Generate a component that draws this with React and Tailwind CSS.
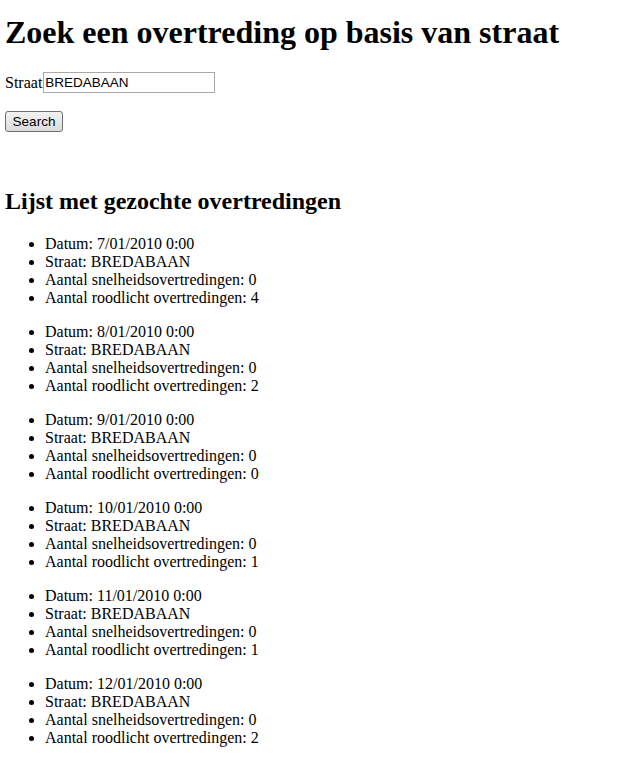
import React from "react";

const items = [
  { d: "7/01/2010 0:00", r: 4 },
  { d: "8/01/2010 0:00", r: 2 },
  { d: "9/01/2010 0:00", r: 0 },
  { d: "10/01/2010 0:00", r: 1 },
  { d: "11/01/2010 0:00", r: 1 },
  { d: "12/01/2010 0:00", r: 2 },
];

export default function App() {
  return (
    <div className="bg-white text-black px-[5px] font-['Liberation_Serif','Times_New_Roman',serif] text-[16px] leading-[18px] min-h-[760px]">
      <h1 className="mt-[14px] text-[32px] leading-[37px] font-bold">
        Zoek een overtreding op basis van straat
      </h1>
      <div className="mt-[21px] flex items-center h-[21px]">
        <span className="leading-[21px]">Straat</span>
        <input
          defaultValue="BREDABAAN"
          className="ml-[1px] w-[172px] h-[21px] border border-[#a9a9a9] px-[1px] font-['Liberation_Sans',Arial,sans-serif] text-[13.5px] text-black outline-none"
        />
      </div>
      <div className="mt-[18px]">
        <button className="w-[58px] h-[21px] border border-[#707070] rounded-[3px] bg-gradient-to-b from-[#f2f2f2] to-[#dcdcdc] font-['Liberation_Sans',Arial,sans-serif] text-[13.5px] text-black leading-[19px]">
          Search
        </button>
      </div>
      <h2 className="mt-[55px] text-[24px] leading-[28px] font-bold">
        Lijst met gezochte overtredingen
      </h2>
      <div className="mt-[20px] flex flex-col gap-[16px]">
        {items.map((it, i) => (
          <ul key={i} className="list-disc pl-[40px]">
            <li>Datum: {it.d}</li>
            <li>Straat: BREDABAAN</li>
            <li>Aantal snelheidsovertredingen: 0</li>
            <li>Aantal roodlicht overtredingen: {it.r}</li>
          </ul>
        ))}
      </div>
    </div>
  );
}
